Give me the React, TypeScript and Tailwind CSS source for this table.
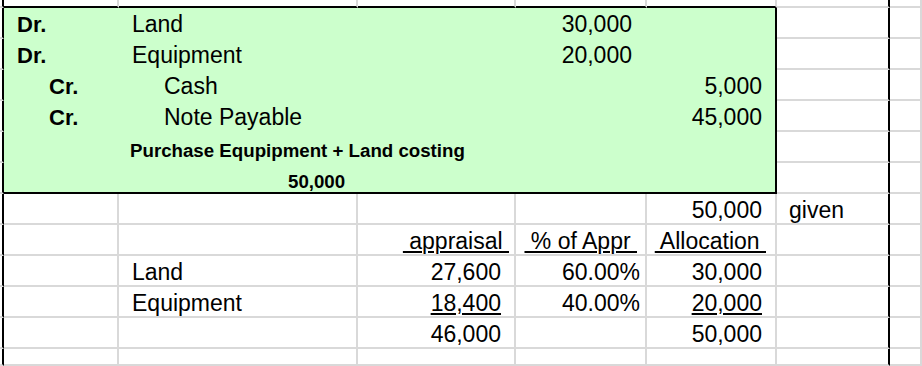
import React from "react";

type Item = {
	text: string;
	pos: string;
	className: string;
	size?: string;
	underline?: boolean;
};

// journal entry inside the green box
const journal: Item[] = [
	{ text: "Dr.", pos: "col-start-1 row-start-1", className: "pl-[13px] pb-[3px]", size: "text-[22px] font-bold" },
	{ text: "Land", pos: "col-start-2 row-start-1", className: "pl-[13px] pb-[3px]" },
	{ text: "30,000", pos: "col-start-4 row-start-1", className: "justify-end pr-[15px] pb-[3px]" },
	{ text: "Dr.", pos: "col-start-1 row-start-2", className: "pl-[13px] pb-[3px]", size: "text-[22px] font-bold" },
	{ text: "Equipment", pos: "col-start-2 row-start-2", className: "pl-[13px] pb-[3px]" },
	{ text: "20,000", pos: "col-start-4 row-start-2", className: "justify-end pr-[15px] pb-[3px]" },
	{ text: "Cr.", pos: "col-start-1 row-start-3", className: "pl-[45px] pb-[3px]", size: "text-[22px] font-bold" },
	{ text: "Cash", pos: "col-start-2 row-start-3", className: "pl-[45px] pb-[3px]" },
	{ text: "5,000", pos: "col-start-5 row-start-3", className: "justify-end pr-[13px] pb-[3px]" },
	{ text: "Cr.", pos: "col-start-1 row-start-4", className: "pl-[45px] pb-[3px]", size: "text-[22px] font-bold" },
	{ text: "Note Payable", pos: "col-start-2 row-start-4", className: "pl-[45px] pb-[3px]" },
	{ text: "45,000", pos: "col-start-5 row-start-4", className: "justify-end pr-[13px] pb-[3px]" },
	{
		text: "Purchase Equpipment + Land costing",
		pos: "col-start-2 col-span-4 row-start-5",
		className: "pl-[11px] pb-[2px]",
		size: "text-[18.7px] font-bold",
	},
	{ text: "50,000", pos: "col-start-2 row-start-6", className: "pl-[169px]", size: "text-[18.7px] font-bold" },
];

// cells of the sheet below the box, keyed row-col
const sheet: Record<string, Omit<Item, "pos">> = {
	"7-5": { text: "50,000", className: "justify-end pr-[13px]" },
	"7-6": { text: "given", className: "pl-[12px]" },
	"8-3": { text: " appraisal ", className: "justify-end pr-[5px]", underline: true },
	"8-4": { text: " % of Appr ", className: "justify-end pr-[8px]", underline: true },
	"8-5": { text: " Allocation ", className: "justify-end pr-[9px]", underline: true },
	"9-2": { text: "Land", className: "pl-[13px]" },
	"9-3": { text: "27,600", className: "justify-end pr-[13px]" },
	"9-4": { text: "60.00%", className: "justify-end pr-[5px]" },
	"9-5": { text: "30,000", className: "justify-end pr-[13px]" },
	"10-2": { text: "Equipment", className: "pl-[13px]" },
	"10-3": { text: "18,400", className: "justify-end pr-[13px]", underline: true },
	"10-4": { text: "40.00%", className: "justify-end pr-[5px]" },
	"10-5": { text: "20,000", className: "justify-end pr-[13px]", underline: true },
	"11-3": { text: "46,000", className: "justify-end pr-[13px]" },
	"11-5": { text: "50,000", className: "justify-end pr-[13px]" },
};

const Text = ({ text, size, underline }: { text: string; size?: string; underline?: boolean }) => (
	<span
		className={`whitespace-pre leading-none ${size ?? "text-[23px]"} ${
			underline ? "underline decoration-2 underline-offset-2" : ""
		}`}
	>
		{text}
	</span>
);

const App = () => {
	const cells: React.ReactNode[] = [];
	for (let r = 0; r < 13; r++) {
		for (let c = 0; c < 8; c++) {
			const inBox = r >= 1 && r <= 6 && c >= 1 && c <= 5;
			if (inBox) {
				if (r === 1 && c === 1) {
					cells.push(
						<div
							key="box"
							className="col-start-2 col-span-5 row-start-2 row-span-6 grid grid-cols-[115px_239px_158px_131px_1fr] grid-rows-[31px_31px_31px_31px_31px_1fr] border-r-2 border-b-2 border-black bg-[#ccffcc]"
						>
							{journal.map((j, i) => (
								<div key={i} className={`flex items-end ${j.pos} ${j.className}`}>
									<Text text={j.text} size={j.size} />
								</div>
							))}
						</div>
					);
				}
				continue;
			}
			const rightBlack = c === 0 || c === 6;
			const bottomBlack = r === 0 && c >= 1 && c <= 5;
			const data = sheet[`${r}-${c}`];
			cells.push(
				<div
					key={`${r}-${c}`}
					className={`flex items-end overflow-visible border-r-2 border-b-2 pb-[1px] ${
						rightBlack ? "border-r-black" : "border-r-[#d9d9d9]"
					} ${bottomBlack ? "border-b-black" : "border-b-[#d9d9d9]"} ${data ? data.className : ""}`}
				>
					{data && <Text text={data.text} underline={data.underline} />}
				</div>
			);
		}
	}

	return (
		<div className="h-[366px] w-[922px] overflow-hidden bg-white font-['Liberation_Sans',Arial,sans-serif] text-black">
			<div className="grid h-full grid-cols-[4px_115px_239px_158px_131px_130px_113px_1fr] grid-rows-[8px_repeat(11,31px)_1fr]">
				{cells}
			</div>
		</div>
	);
};

export default App;
